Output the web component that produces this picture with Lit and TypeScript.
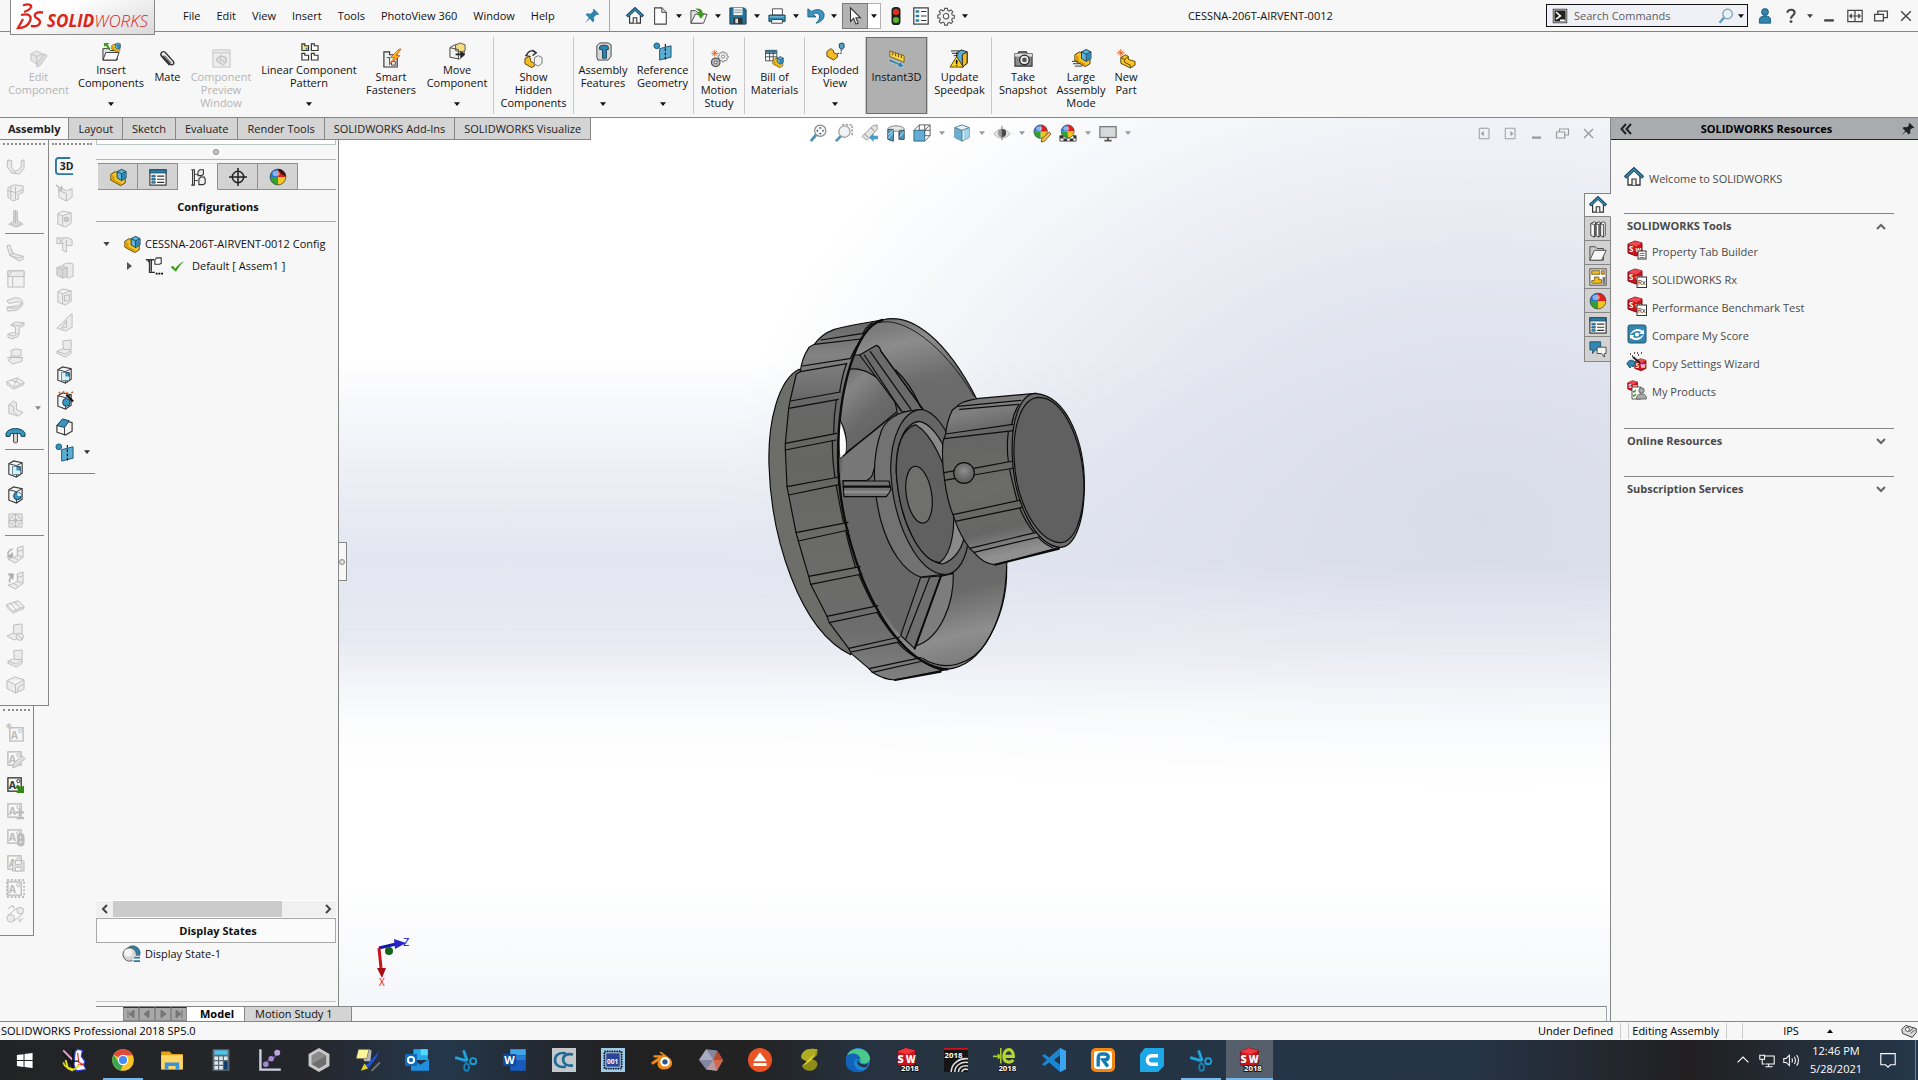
import { LitElement, html, svg, css, nothing } from "lit";
import { customElement, property, state } from "lit/decorators.js";
import { classMap } from "lit/directives/class-map.js";

/* ---------- shared icon parts ---------- */

const part = svg`
  <path d="M2 7l5-3 3 1.500v4l8 2v5l-5 3-11-6z" fill="#f7c325" stroke="#4a3a10"/>
  <path d="M2 7l4 2v4l7 3.500V19L2 13z" fill="#d99b0c"/>
  <path d="M9 4l5-2.500 5 2.500v7l-5 3-5-3z" fill="#5fb4da" stroke="#173f57"/>
  <path d="M9 4l5 2.500 5-2.500M14 6.500V14" fill="none" stroke="#173f57"/>
  <path d="M14.500 7l4-2v6l-4 2.500z" fill="#2f86b3"/>`;

const house = svg`
  <path d="M4 9v9h12V9l-6-6z" fill="#fff" stroke="#333" stroke-width="1.300"/>
  <path d="M8 18v-6h4v6" fill="#eee" stroke="#333" stroke-width="1.200"/>
  <path d="M1 10.500L10 2l9 8.500" fill="none" stroke="#16435c" stroke-width="3.400"/>
  <path d="M1.800 10L10 2.300 18.200 10" fill="none" stroke="#3c93bd" stroke-width="1.500"/>`;

const ball = svg`
  <path d="M10 10V1a9 9 0 0 1 9 9z" fill="#e02020"/>
  <path d="M10 10h9a9 9 0 0 1-9 9z" fill="#f0c51e"/>
  <path d="M10 10v9a9 9 0 0 1-9-9z" fill="#2fa32f"/>
  <path d="M10 10H1a9 9 0 0 1 9-9z" fill="#2c76d8"/>
  <circle cx="10" cy="10" r="8.800" fill="none" stroke="#444" stroke-width=".8"/>
  <ellipse cx="8" cy="6" rx="4" ry="3" fill="#fff" opacity=".45"/>`;

const swCube = svg`
  <path d="M1 4l7-3 7 2v10l-6 3-8-3z" fill="#c9151e" stroke="#7d0a10"/>
  <path d="M1 4l8 2.500L15 3 8 1z" fill="#ec4a50"/>
  <text x="2" y="12" font-size="8" font-weight="700" fill="#fff" font-family="Open Sans,sans-serif">S</text>
  <text x="8.500" y="12" font-size="6" font-weight="700" fill="#fff" font-family="Open Sans,sans-serif">W</text>`;

const frameA = svg`
  <rect x="2" y="3" width="14" height="14" fill="none" stroke="currentColor" stroke-width="1.400"/>
  <text x="3" y="15" font-size="11" font-weight="700" fill="currentColor" stroke="none" font-family="Open Sans,sans-serif">A</text>
  <circle cx="13" cy="6.500" r="1.700" fill="none" stroke="currentColor"/>`;

const gearPath = svg`
  <path d="M8.500 1.500h3l.5 2.300 1.500.7 2-1.300 2.100 2.100-1.300 2 .7 1.500 2.300.5v3l-2.300.5-.7 1.500 1.300 2-2.100 2.100-2-1.300-1.500.7-.5 2.300h-3L8 17.500l-1.500-.7-2 1.300-2.100-2.100 1.300-2-.7-1.500L.8 12V9l2.200-.5.7-1.500-1.300-2 2.100-2.100 2 1.300L8 3.500z" fill="#f2f2f2" stroke="#555" stroke-width="1.200"/>
  <circle cx="10" cy="10.300" r="3" fill="#fff" stroke="#555" stroke-width="1.200"/>`;

const grid9 = svg`<path d="M3 4h14v13H3zM3 8h14M3 12h14M8 4v13M12.500 4v13" fill="#fff" stroke="#333"/><path d="M3 4h14v3H3z" fill="#2c6f92"/>`;

const box = svg`<path d="M3 5l5-3 9 2v11l-6 4-8-3z" fill="#f4f4f4" stroke="#3a3a3a" stroke-width="1.200"/><path d="M3 5l8 2 6-3M11 7v12" fill="none" stroke="#3a3a3a"/>`;

const ICONS: Record<string, unknown> = {
  house,
  part,
  ball,
  pin: svg`<path d="M12 2l6 6-2 1-1-.5-3 3 .5 4L11 17l-3.500-4L2 18l4.500-6L3 8.500 4.500 7l4 .5 3-3L11 3z" fill="#2f83ad"/>`,
  pinDark: svg`<path d="M12 1l7 7-2 1-1-.5-3 3 .5 4L11 18l-4-4.500L1 19l5-6.500L2 8.500 4.500 7l4 .5 3-3L11 3z" fill="#222"/>`,
  newDoc: svg`<path d="M4 1h8l5 5v13H4z" fill="#fff" stroke="#444" stroke-width="1.200"/><path d="M12 1v5h5" fill="#ddd" stroke="#444"/>`,
  open: svg`<path d="M1 4h5l2 2h5v12H1z" fill="#ddd" stroke="#444"/><path d="M1 18L6 8h13l-4 10z" fill="#f7f7f7" stroke="#444"/><path d="M6 2c5-1 8 1 8 5h3l-5 6-4-6h3c0-2-2-3-5-5z" fill="#3f9c1d"/>`,
  save: svg`<path d="M1 1h16l2 2v16H1z" fill="#23739a" stroke="#12394d"/><path d="M5 1h10v8H5z" fill="#e9f3f8"/><path d="M6 3.500h8M6 6h8" stroke="#888"/><path d="M5 12h10v7H5z" fill="#333"/><path d="M7 13h3v5H7z" fill="#ddd"/>`,
  print: svg`<path d="M5 2h11v7H5z" fill="#fff" stroke="#444"/><path d="M1 9h18v7H1z" fill="#3288b0" stroke="#163f55"/><path d="M4 14h12v4H4z" fill="#fff" stroke="#333"/><path d="M2 11h16" stroke="#9cd0e6"/>`,
  undo: svg`<path d="M1 2v9h9L7 8c3-2 7-1 7 3 0 3-2 5-4 7 5-1 9-4 9-9 0-6-8-8-14-4z" fill="#3c93c2" stroke="#1d5c80"/>`,
  cursor: svg`<path d="M5 1v15l3.500-3.500L11 19l2.500-1-2.500-6h5z" fill="#fff" stroke="#333" stroke-width="1.200"/>`,
  traffic: svg`<rect x="5" y="0" width="10" height="20" rx="4" fill="#222"/><circle cx="10" cy="5.500" r="3.400" fill="#e4301e"/><circle cx="10" cy="14.500" r="3.400" fill="#57b52c"/>`,
  list: svg`<rect x="2" y="1" width="16" height="18" fill="#fff" stroke="#333" stroke-width="1.300"/><path d="M4 3.500h4v3H4zM4 8.500h4v3H4zM4 13.500h4v3H4z" fill="#2b7fa8"/><path d="M10 5h6M10 10h6M10 15h6" stroke="#333" stroke-width="1.300"/>`,
  gear: gearPath,
  prompt: svg`<rect x="1" y="1" width="18" height="18" fill="#222"/><rect x="2.500" y="2.500" width="15" height="15" fill="none" stroke="#fff"/><path d="M5 5l5.500 5L5 14M10 15.500h6" fill="none" stroke="#fff" stroke-width="2"/>`,
  lens: svg`<circle cx="12" cy="7.500" r="6" fill="#e6f1f8" stroke="#7f98a8" stroke-width="1.500"/><path d="M7.500 12L2 18.500" stroke="#5f9dc0" stroke-width="3"/>`,
  user: svg`<circle cx="10" cy="5" r="4.300" fill="#2d86b0" stroke="#174d69"/><path d="M3 19v-4c0-4 3-5 7-5s7 1 7 5v4z" fill="#2d86b0" stroke="#174d69"/>`,
  help: svg`<path d="M5.500 6c0-5 9-5 9 0 0 3.500-4.500 3-4.500 7.500" fill="none" stroke="#444" stroke-width="2.600"/><circle cx="10" cy="17" r="1.800" fill="#444"/>`,
  min: svg`<path d="M4 15.500h12" stroke="currentColor" stroke-width="3"/>`,
  split: svg`<path d="M1 3h18v14H1zM10 3v14M4 10h12M6 7.500L3.500 10 6 12.500M14 7.500l2.500 2.500-2.500 2.500" fill="none" stroke="currentColor" stroke-width="1.500"/>`,
  restore: svg`<path d="M2 8h11v8H2zM6 8V4h12v8h-5" fill="none" stroke="currentColor" stroke-width="1.600"/>`,
  close: svg`<path d="M4 4l12 12M16 4L4 16" stroke="currentColor" stroke-width="1.800"/>`,
  paneL: svg`<path d="M3 3h13v14H3z" fill="none" stroke="currentColor" stroke-width="1.300"/><path d="M9 6.500v7L5 10z" fill="currentColor"/>`,
  paneR: svg`<path d="M3 3h13v14H3z" fill="none" stroke="currentColor" stroke-width="1.300"/><path d="M10 6.500v7l4-3.500z" fill="currentColor"/>`,

  /* ribbon */
  editComp: svg`<g fill="#e6e6e6" stroke="#c2c2c2"><path d="M2 5l6-3 6 3v7l-6 4-6-4z"/><path d="M2 5l6 3 6-3M8 8v8" fill="none"/><path d="M16 5l3 2-7 10-4 2 1-4z" fill="#ddd"/></g>`,
  insertComp: svg`<path d="M1 7h6l2 2h7v10H1z" fill="#e4e4e4" stroke="#333"/><path d="M1 19l3-8h14l-3 8z" fill="#fafafa" stroke="#333"/><path d="M2 1h6L6 3l3 4-2 1-3-4-2 1z" fill="#3f9c1d"/><g transform="translate(9 0) scale(.55)">${part}</g>`,
  clip: svg`<path d="M5 7l8 9c2 2 5-1 3-3L8 4C6 1 1 4 4 8l8 9" fill="none" stroke="#333" stroke-width="1.500"/><path d="M7 7l7 8" stroke="#777" stroke-width="1.200"/>`,
  preview: svg`<path d="M1 1h18v18H1zM1 4h18" fill="#ededed" stroke="#c4c4c4"/><path d="M5 10l4-3 6 2v5l-3 3-7-4zM9 7v4l6 3" fill="#ddd" stroke="#bbb"/>`,
  pattern: svg`<g fill="#fff" stroke="#333" stroke-width="1.200"><path d="M2 2h3v2h4v5H2z" fill="#ffe680"/><path d="M12 2h3v2h4v5h-7zM2 12h3v2h4v5H2zM12 12h3v2h4v5h-7z"/></g><path d="M6 6h2v2H6z" fill="#2b7fa8"/>`,
  smart: svg`<path d="M2 3h6v3h8v13H2z" fill="#eee" stroke="#333" stroke-width="1.200"/><path d="M5 9h3v8M10 13h4v4h-4z" fill="none" stroke="#444"/><path d="M18 0l-9 9h4l-5 7 11-9h-4l5-7z" fill="#ffb01e" stroke="#d2501a" stroke-width=".8"/>`,
  move: svg`<path d="M2 6l5-3 10 1v10l-5 4-10-2z" fill="#f0f0f0" stroke="#444"/><path d="M8 3l5-2 5 2v6l-4 2-6-2z" fill="#f7dc80" stroke="#555"/><path d="M2 6l9 2v10" fill="none" stroke="#444"/><path d="M8 12h5V9l5 4-5 4v-3H8z" fill="#222"/>`,
  showHidden: svg`<path d="M3 6c2-5 7-5 9-2M9 1l4 3-4 3M5 3L2 7l5 1" fill="none" stroke="#333" stroke-width="1.400"/><path d="M1 10l4-2 2 2v3l4 2v3l-3 1.500-7-4z" fill="#f5bb22" stroke="#5a4308"/><path d="M11 9l4-2 4 2v6l-4 3-4-2z" fill="#f2f2f2" stroke="#777"/>`,
  asmFeat: svg`<path d="M3 4l3-3h9l3 2v12l-3 4H4l-1-3z" fill="#d8d8d8" stroke="#444"/><path d="M6 5c0-2 9-2 9 0v3h-2v9H9V8H6z" fill="#2f86b3" stroke="#163f55"/>`,
  refGeo: svg`<circle cx="4" cy="4" r="3" fill="#3a94c0" stroke="#1b5573"/><path d="M7 7l12-3v12L7 19z" fill="#5aaed2" stroke="#1b5573"/><path d="M13 2v18" stroke="#111" stroke-width="1.200" stroke-dasharray="3 1.500"/>`,
  motion: svg`<g transform="translate(8 2) scale(.58)">${gearPath}</g><circle cx="6" cy="14" r="4.500" fill="#b8b8b8" stroke="#555" stroke-width="1.300"/><circle cx="6" cy="14" r="1.500" fill="#fff" stroke="#555"/><path d="M5 1v7M1.500 4.500h7M2.500 2l5 5M7.500 2l-5 5" stroke="#e2641c"/>`,
  bom: svg`<g transform="translate(-2 -2) scale(.85)">${grid9}</g><g transform="translate(7 7) scale(.65)">${part}</g>`,
  exploded: svg`<path d="M1 10l4-3 3 2v2l4 2v3l-4 3-7-4z" fill="#f5bb22" stroke="#5a4308"/><path d="M14 2l3-1 2 1v4l-2.500 2L14 6z" fill="#4da1c8" stroke="#173f57"/><path d="M12 12h4V8" fill="none" stroke="#222" stroke-dasharray="2 1"/>`,
  instant: svg`<path d="M3 2l15 5v7L3 8z" fill="#f7d14a" stroke="#7a6112"/><path d="M6 3.500v3M9 4.500v3M12 5.500v3M15 6.500v3" stroke="#5a470c"/><path d="M2 10l11 5 1-2 4 6-7 0 1-2L2 13z" fill="#2d7fa8" stroke="#e8f2f7" stroke-width=".5"/>`,
  speedpak: svg`<path d="M7 4l5-3 6 2v12l-5 4-6-2z" fill="#5aaed2" stroke="#222"/><path d="M13 6l5-3v12l-5 4z" fill="#f5bb22" stroke="#222"/><path d="M1 2h9M2 4.500h7M4 7h4" stroke="#222"/><path d="M7 8l7 11H0z" fill="#ffd21e" stroke="#5a4308"/><path d="M7 11.500v4M7 16.500v1.200" stroke="#000" stroke-width="1.600"/>`,
  camera: svg`<path d="M1 5h3l1-2h8l1 2h5v13H1z" fill="#8d8d8d" stroke="#333" stroke-width="1.200"/><path d="M1 5h18v3H1z" fill="#ddd"/><circle cx="11" cy="11.500" r="5" fill="#eee" stroke="#222" stroke-width="1.400"/><circle cx="11" cy="11.500" r="2.500" fill="#555"/>`,
  large: svg`<g transform="translate(1 -1)">${part}</g><path d="M0 13h6M1 15.500h8M3 18h8" stroke="#333"/>`,
  newPart: svg`<path d="M4 9l5-3 3 2v3l7 2v4l-5 3L4 15z" fill="#f7c325" stroke="#5a4308"/><path d="M4 9l4 2 4-3M8 11v3l6 3v3" fill="none" stroke="#5a4308"/><path d="M4 0v8M0 4h8M1.500 1.500l5 5M6.500 1.500l-5 5" stroke="#e2641c"/>`,

  /* heads-up view bar */
  zoomFit: svg`<path d="M8 12l-6 7" stroke="#4f93b8" stroke-width="3.200"/><circle cx="12.500" cy="7.500" r="6.300" fill="#f4f7fa" stroke="#888" stroke-width="1.300"/><path d="M12.500 3l1.500 2h-3zM12.500 12l1.500-2h-3zM8 7.500L10 6v3zM17 7.500L15 6v3z" fill="#444"/>`,
  zoomArea: svg`<path d="M8 1h11v12" fill="none" stroke="#555" stroke-dasharray="2.500 1.500"/><path d="M7 13l-6 6" stroke="#4f93b8" stroke-width="3"/><circle cx="10.500" cy="8.500" r="6.300" fill="#eef3f7" stroke="#999" stroke-width="1.300"/>`,
  prevView: svg`<path d="M1 14L13 2l5-1v5L7 18z" fill="#e4e4e4" stroke="#999"/><path d="M4 11l4 4M11 4l4 4" stroke="#777"/><path d="M19 13h-5v-3l-5 5 5 5v-3h5z" fill="#4b9cc6"/>`,
  section: svg`<path d="M1 5c3-4 15-4 18 0v12h-6V8H7v11L1 17z" fill="#e6e6e6" stroke="#777"/><path d="M1 6h6v13l-6-2zM14 7h5v10h-5z" fill="#4f9fc4" stroke="#356"/><path d="M1 12l6-5M1 16l6-6M14 14l5-5" stroke="#dceef6"/>`,
  orient: svg`<path d="M7 1h12v12H7zM13 1v12M7 7h12" fill="#fff" stroke="#555"/><path d="M1 7h12v12H1z" fill="#62add0" stroke="#2f6684"/><path d="M1 7l6-6M13 7l6-6M13 19l6-6" stroke="#555"/>`,
  cube: svg`<path d="M2 4l8-3 8 3v11l-8 4-8-4z" fill="#e9f4fa" stroke="#4a7389"/><path d="M2 4l8 3v12l-8-4z" fill="#68b0d2"/><path d="M12 6.500L18 4v11l-6 3z" fill="#a5d3e8"/><path d="M2 4l8 3 8-3M10 7v12" fill="none" stroke="#4a7389"/>`,
  eye: svg`<path d="M1 11c5-7 13-7 18 0-5 6-13 6-18 0z" fill="#e2e2e2" stroke="#aaa"/><circle cx="10" cy="10" r="4.500" fill="#999"/><path d="M10 5.500a4.500 4.500 0 0 1 0 9z" fill="#444"/><path d="M10 2v16" stroke="#666"/>`,
  ballPen: svg`<g transform="scale(.85)">${ball}</g><path d="M18 9l2 2-7 8-4 1 1-4z" fill="#f4c430" stroke="#654"/>`,
  ballScene: svg`<path d="M1 13h18v6H1z" fill="#fff" stroke="#444"/><path d="M1 13h4v3h4v-3h3v3h4v-3h3v3h-3v3h-4v-3H9v3H5v-3H1z" fill="#333"/><g transform="translate(1.500 0) scale(.82)">${ball}</g>`,
  monitor: svg`<rect x="1" y="3" width="18" height="12" fill="#d5d9dc" stroke="#777" stroke-width="1.400"/><path d="M10 15v3M6 18.500h8" stroke="#555" stroke-width="2"/>`,

  /* manager tabs and tree */
  props: svg`<rect x="1" y="2" width="18" height="17" fill="#fff" stroke="#333" stroke-width="1.300"/><path d="M1 2h18v3.500H1z" fill="#2b7fa8" stroke="#1d4e68"/><path d="M3 8h4v2H3zM3 11.500h4v2H3zM3 15h4v2H3z" fill="#2b7fa8" stroke="#1d4e68" stroke-width=".6"/><path d="M9 9h8M9 12.500h8M9 16h8" stroke="#333" stroke-width="1.200"/>`,
  config: svg`<path d="M4 2v17M2.500 2h4M2.500 19h4M6 2v17" fill="none" stroke="#333" stroke-width="1.200"/><path d="M6 7h4M6 14h4" stroke="#333"/><path d="M10 4l2-2h4v5l-2 1.500h-4zM11 12l2-2h4v1l1 1v5l-2 1.500h-5z" fill="#eee" stroke="#333" stroke-width="1.200"/>`,
  target: svg`<circle cx="10" cy="10" r="6.300" fill="none" stroke="#222" stroke-width="1.700"/><path d="M10 0v20M0 10h20" stroke="#222" stroke-width="1.700"/>`,
  ballDark: svg`${ball}<path d="M10 1c4 0 8 3 9 8-3-1-8-3-9-8z" fill="#301818"/>`,
  treeCfg: svg`<path d="M1 3h9M5 3v14h6M3 3v1M7 3v13M3 5h2" fill="none" stroke="#333" stroke-width="1.500"/><path d="M11 3l2-2h5v6l-2 1h-5z" fill="#fff" stroke="#333" stroke-width="1.200"/><path d="M12 18.500h2M15 18.500h2M18 18.500h2" stroke="#000" stroke-width="2"/>`,
  check: svg`<path d="M1 11l3-2 3 4c3-5 7-8 12-10-5 4-8 8-11 14z" fill="#2f9e0f"/>`,
  dispState: svg`<circle cx="12" cy="9" r="8" fill="#2f7fa6" stroke="#1b5573"/><circle cx="8.500" cy="10.500" r="7.500" fill="#d4d4d4" stroke="#555"/><ellipse cx="7" cy="8.500" rx="4.500" ry="4" fill="#f6f6f6"/><path d="M12 14h8M12 18h8" stroke="#f7f7f7" stroke-width="4"/><path d="M13 14h7M13 18h7" stroke="#2a7aa1" stroke-width="2"/>`,

  /* left tool columns, unavailable commands */
  d1: svg`<path d="M2 3l4 1v7l3 4 4-1 3-4V4l3-1v9l-5 6-7-1-5-7z"/><path d="M2 3l-1 7 6 8M9 15l1 3"/>`,
  d2: svg`<path d="M2 5l6-3 10 1v7l-5 2v5l-6 2-5-4zM2 8l8 2 8-3M10 4v13M5 4v12"/>`,
  d3: svg`<path d="M8 2c2-1 4 0 4 1v9l6 4-7 3-8-3 5-3z" fill="#d6d6d6"/><path d="M10 2v13"/>`,
  d4: svg`<path d="M1 3l3-1 3 9 11 3v3l-4 2L4 13zM7 11l-3 2M5 6l3 5M18 14l-5 2-9-3"/>`,
  d5: svg`<path d="M2 2h17v17H2z" fill="#f2f2f2"/><path d="M2 2h17v6H2zM7 8v11M2 8l5-6"/>`,
  d6: svg`<path d="M1 6l7-3c12-1 13 9 3 13l-9 1-1-4 12-2c3-1 3-3 0-4L3 9z"/><path d="M1 13l8 1c6-1 9-4 7-7" fill="none"/>`,
  d7: svg`<path d="M5 4l5-3 9 1v3l-5 2v6l-1 3-6 3-5-2v-3l5-2 3 1V7z"/><path d="M5 4l9 1 5-3M2 14l6 2 5-3" fill="none"/>`,
  d8: svg`<path d="M5 4l5-2 6 1v6l-5 1-5-1zM5 9v3l-3 2 5 4 10-3v-3l-5-2M1 11l17 0"/>`,
  d9: svg`<path d="M1 9l11-4 7 5-11 5zM1 9v3l7 5 11-5v-2M6 8l9 3M12 6l-4 8"/>`,
  d10: svg`<path d="M3 6l5-4 3 2v7l7 3-5 4-10-3zM3 6l5 2v6l5 4"/>`,
  d11: svg`<path d="M3 3h14v14H3z"/><circle cx="10" cy="10" r="6"/><path d="M10 3v14M3 10h14M6 6l8 8M14 6l-8 8"/>`,
  d12: svg`<path d="M12 3l6-2v12l-8 6-8-4 6-2 4-2z"/><path d="M12 3v8l6 2M12 7l6-2M8 13l5 3" fill="none"/><path d="M7 4c-5 2-6 5-4 8" fill="none" stroke-width="2"/><path d="M1 13h6V8z" fill="#aaa"/>`,
  d12b: svg`<path d="M12 3l6-2v12l-8 6-8-4 6-2 4-2z"/><path d="M12 3v8l6 2M12 7l6-2M8 13l5 3" fill="none"/><path d="M4 12c-1-4 1-6 4-7" fill="none" stroke-width="2"/><path d="M2 3h6l-1 6z" fill="#aaa"/>`,
  d13: svg`<path d="M1 8l12-4 6 6-12 5zM1 8v3l6 6 12-5v-2M5 7l6 7M9 5l6 7"/>`,
  d14: svg`<path d="M8 2l9-1v10l-3 1-6-1zM8 10l-7 4 8 4 8-5"/><circle cx="14.500" cy="14.500" r="3.800"/><path d="M12 12l5 5"/>`,
  d15: svg`<path d="M8 2l9-1v10l-8 0zM8 10l-6 3 9 3 6-4M2 13v2l9 4 6-4v-3"/>`,
  d16: svg`<path d="M1 6l8-4 10 3v10l-9 4-9-5zM1 6l9 4 9-5M10 10v9M12 18c0-4 2-7 6-8"/>`,
  d17: svg`<path d="M4 8l4-2 4 2 6-2v9l-6 4-8-4zM4 8l8 3M12 11v8"/><path d="M1 2l6 5M7 3v4H3" stroke-width="1.600" fill="none"/>`,
  d18: svg`<path d="M3 5l5-3 9 2v11l-6 4-8-3zM3 5l5 2 9-3M8 7v11"/><circle cx="12" cy="11" r="2.500" fill="#c8c8c8"/>`,
  d18b: svg`<path d="M3 5l5-3 9 2v11l-6 4-8-3zM3 5l5 2 9-3M8 7v11M10 9l5-1v6l-5 1z"/>`,
  d19: svg`<path d="M2 3h12l4 2v6h-6v7l-4-2V9H2zM12 5v6M4 4l5 5M9 4L4 9"/>`,
  d20: svg`<path d="M8 4l5-2 6 1v13l-5 2-2-1"/><path d="M2 7l5-2 6 2v9l-5 2-6-3z" fill="#d9d9d9"/><path d="M2 7l6 2 5-2M8 9v9" fill="none"/>`,
  d21: svg`<path d="M2 16L16 2l2-1v14l-7 4zM12 8v7l-5 1z"/>`,
  a1: svg`<g transform="translate(2 2)">${frameA}</g><path d="M3 0v6M0 3h6M1 1l4 4M5 1L1 5" stroke="currentColor" fill="none"/>`,
  a2: svg`${frameA}<path d="M17 7l3 3-8 8-5 2 1-5z" fill="#ddd" stroke="currentColor"/>`,
  a3: svg`${frameA}<path d="M12 10l4 3 3-2v8h-8l2-3-3-3z" fill="#2f8a12" stroke="none"/>`,
  a4: svg`${frameA}<path d="M10 12h9M14.500 8v8M11 18h8" stroke="currentColor" stroke-width="2.200"/>`,
  a5: svg`${frameA}<rect x="12" y="7" width="7" height="13" rx="3" fill="currentColor"/><circle cx="15.500" cy="11" r="1.500" fill="#eee"/><circle cx="15.500" cy="16" r="1.500" fill="#eee"/>`,
  a6: svg`${frameA}<path d="M7 8h11l1 1v10H7z" fill="#ddd" stroke="currentColor"/><path d="M10 8h6v4h-6zM10 15h6v4h-6z" fill="#f7f7f7" stroke="currentColor"/>`,
  a7: svg`${frameA}<rect x="1" y="1" width="18" height="18" fill="none" stroke="currentColor" stroke-width="2" stroke-dasharray="2 2"/>`,
  a8: svg`<circle cx="5" cy="14" r="4"/><circle cx="15" cy="6" r="3.500"/><path d="M2 11L12 3M8 17l10-8M2 4l4-3M5 1h3v3M18 14l-4 4v-4"/>`,
  td: svg`<path d="M16 1H4C2 1 1 2 1 4v11c0 2 1 3 3 3h15" fill="none" stroke="#2a7aa1" stroke-width="2"/><text x="5" y="14" font-size="11" font-weight="700" fill="#222" font-family="Open Sans,sans-serif">3D</text>`,
  pocket: svg`${box}<path d="M7 8h8v8H7z" fill="#3a94c0" stroke="#163f55"/><path d="M7 8h4v4h4v4H7z" fill="#d9edf6"/>`,
  holeW: svg`${box}<circle cx="12" cy="12" r="4" fill="#3a94c0" stroke="#163f55"/><path d="M12 4l7 7" stroke="#111" stroke-width="2.400"/><path d="M4 1l2 2M9 0v3M13 1l-1 2M17 2l2-1" stroke="#e2641c" stroke-width="1.600"/>`,
  hole: svg`${box}<circle cx="12" cy="11.500" r="4" fill="#3a94c0" stroke="#163f55"/><path d="M12 11.500h4a4 4 0 0 0-4-4z" fill="#d9edf6"/>`,
  chamfer: svg`<path d="M2 9l6-6 10 3v9l-7 4-9-3z" fill="#f4f4f4" stroke="#333" stroke-width="1.200"/><path d="M2 9l6-7 7 2-5 7z" fill="#3a94c0" stroke="#163f55"/><path d="M10 11v8" stroke="#333"/>`,
  mushroom: svg`<path d="M8 8h4v10c0 1-4 1-4 0z" fill="#ddd" stroke="#333"/><path d="M0 9c2-7 18-7 20 0v3h-4l-1-3H5l-1 3H0z" fill="#3a94c0" stroke="#163f55"/>`,

  /* task pane */
  books: svg`<g fill="#fff" stroke="#333"><path d="M2 4l4-2 2 1v14l-2 2-4-2zM7 4l4-2 2 1v14l-2 2-4-2zM12 4l4-2 2 1v14l-2 2-4-2z"/><path d="M2 4l4 1v14M7 4l4 1v14M12 4l4 1v14" fill="none"/></g>`,
  folder: svg`<path d="M1 3h6l2 2h7v13H1z" fill="#c9c9c9" stroke="#444"/><path d="M1 18L6 7h13l-5 11z" fill="#f7f7f7" stroke="#444"/>`,
  palette: svg`<rect x="1" y="1" width="18" height="18" fill="#fff" stroke="#333"/><path d="M3 3h9v4H3zM14 3h3v4h-3zM6 10h5v3h3v4H3v-3h3z" fill="#f2bd1b" stroke="#5a4308" stroke-width=".8"/><path d="M15 10h3v8h-3z" fill="#777"/>`,
  chat: svg`<path d="M1 2h12v9H7l-3 4v-4H1z" fill="#3288b0" stroke="#1b5573"/><path d="M9 8h10v7h-2v4l-3-4H9z" fill="#f4f4f4" stroke="#444"/>`,
  ptb: svg`${swCube}<rect x="11" y="11" width="8" height="8" fill="#fff" stroke="#333"/><path d="M12.500 13.500h5M12.500 15.500h5M12.500 17.500h5" stroke="#555" stroke-width=".8"/>`,
  rx: svg`${swCube}<rect x="10" y="9" width="9.500" height="10.500" fill="#fff" stroke="#333"/><text x="10.800" y="17" font-size="7" fill="#222" font-family="Open Sans,sans-serif">Rx</text>`,
  score: svg`<rect x="1" y="1" width="18" height="18" rx="2" fill="#3585ae" stroke="#1c5776"/><path d="M3 11c2-6 9-8 13-4l1-2v5h-5l2-2c-3-2-7-1-11 3zM17 10c-2 6-9 8-13 4l-1 1v-4h4l-1 2c3 2 7 1 11-3z" fill="#fff"/><circle cx="10" cy="10.500" r="2" fill="#fff"/>`,
  wizard: svg`<g transform="translate(7 6) scale(.8)">${swCube}</g><path d="M0 12c0-4 8-6 8 0l-2 3-1-2-2 3z" fill="#3585ae" stroke="#1c5776"/><path d="M6 5l7 6" stroke="#222" stroke-width="2"/><path d="M3 2h1M7 1h1M11 3h1M5 4h1M14 1h1M10 1h1" stroke="#222" stroke-width="1.400"/>`,
  products: svg`<g transform="scale(.7)">${swCube}</g><path d="M5 7h9v12H5z" fill="#fff" stroke="#555"/><path d="M6 11l1 1 2-2M6 15l1 1 2-2" fill="none" stroke="#2f9e0f" stroke-width="1.300"/><circle cx="14.500" cy="10.500" r="2.700" fill="#aaa" stroke="#666"/><path d="M9.500 19c0-4 2-5 5-5s5 1 5 5z" fill="#aaa" stroke="#666"/>`,
  tag: svg`<path d="M1 8l5-5 13 4v5l-5 6L2 13z" fill="#ddd" stroke="#333" stroke-width="1.200"/><circle cx="8" cy="8" r="2.500" fill="#fff" stroke="#333"/><path d="M12 13l5-4M10 11l5-4" stroke="#333"/>`,

  /* taskbar */
  win: svg`<path d="M2 4.300L9 3.300v6.300H2zM10 3.100L18.500 2v7.600H10zM2 10.500h7v6.300l-7-1zM10 10.500h8.500V18L10 16.900z" fill="#fff"/>`,
  plane: svg`<path d="M11 3l2-2 4 1-1 5 3 4-1 3 2 4-8 1-2-5z" fill="#fff" stroke="#2b3ee0" stroke-width=".9"/><path d="M13 4l1 8 4 2M13 14h5" stroke="#e03030" fill="none"/><path d="M1 2l8 8" stroke="#e3a9d0" stroke-width="1.500"/><path d="M1 5l8 10M9 1v17M6 11h8" stroke="#111" fill="none"/><path d="M1 12c1 4 5 5 9 6l5-4M3 10l2 7 4 2" stroke="#e8e020" stroke-width="1.500" fill="none"/>`,
  chrome: svg`<circle cx="10" cy="10" r="9" fill="#f7c52b"/><path d="M10 10L2.200 5.500A9 9 0 0 1 17.800 5.500L18 6h-8z" fill="#de4b3c"/><path d="M2.200 5.500L6.500 12l3.500 2-2 4.800A9 9 0 0 1 2.200 5.500z" fill="#3aa757"/><circle cx="10" cy="10" r="4.300" fill="#fff"/><circle cx="10" cy="10" r="3.400" fill="#4a8af4"/>`,
  explorer: svg`<path d="M1 3h7l2 2h9v12H1z" fill="#e5a417"/><path d="M1 6h18v12H1z" fill="#ffd767"/><path d="M4 18v-6h12v6h-3v-3H7v3z" fill="#3a94dd"/>`,
  calc: svg`<rect x="3" y="1" width="14" height="18" fill="#5b6b77"/><rect x="4.500" y="2" width="11" height="3.500" fill="#4cc8f0"/><path d="M4.500 7h3v3h-3zM8.500 7h3v3h-3zM12.500 7h3v3h-3zM4.500 11h3v3h-3zM8.500 11h3v3h-3zM4.500 15h3v3h-3zM8.500 15h3v3h-3z" fill="#e4e8ea"/><path d="M12.500 11h3v7h-3z" fill="#12406e"/>`,
  graph: svg`<path d="M2 1v17h17" fill="none" stroke="#cfcfe4" stroke-width="2"/><path d="M5 14l4-4 3 0 4-6" stroke="#7a5fa8" fill="none"/><circle cx="6.500" cy="13.500" r="2.300" fill="#a48bd0"/><circle cx="11" cy="9" r="2.300" fill="#a48bd0"/><circle cx="16" cy="4" r="2.500" fill="#b8a6dc"/>`,
  hex: svg`<path d="M10 0l8.700 5v10L10 20l-8.700-5V5z" fill="#c8c8c8"/><path d="M10 3l6 3.500v7L10 17l-6-3.500v-7z" fill="#6e6e6e"/><path d="M10 3l6 3.500L4 13.500v-7z" fill="#8b8b8b"/>`,
  notes: svg`<path d="M2 1l9 0-2 8-9 0z" fill="#fbf49b" stroke="#444" stroke-width=".6"/><path d="M11 1l2 1-1 9H7L6 9h3z" fill="#b6b6b6"/><path d="M13 19l7-7" stroke="#777" stroke-width="1.500"/><path d="M19 3l-9 10-3 1 1 3 3-1 6-8z" fill="#1d53d8"/><path d="M7 13l-3 6 6-2z" fill="#e8d51c"/>`,
  outlook: svg`<path d="M7 1h12v9H7z" fill="#28a8ea"/><path d="M5 9l8 5 7-5v10H5z" fill="#1f8fe0"/><path d="M13 1h6v5h-6z" fill="#50d9ff"/><rect x="0" y="5" width="10" height="10" fill="#0f6cbd"/><circle cx="5" cy="10" r="2.600" fill="none" stroke="#fff" stroke-width="1.600"/>`,
  snip: svg`<path d="M8 2l3 9M1 8l10 3" stroke="#1291c9" stroke-width="2.600"/><path d="M8 2l3 8M1 8l9 2" stroke="#3cb9ea" stroke-width=".8"/><circle cx="16" cy="11" r="2.500" fill="none" stroke="#19a0d8" stroke-width="1.500"/><ellipse cx="10.500" cy="16" rx="2" ry="3" fill="none" stroke="#1683b8" stroke-width="1.500"/>`,
  word: svg`<path d="M6 1h13v5H6z" fill="#41a5ee"/><path d="M6 6h13v4H6z" fill="#2b7cd3"/><path d="M6 10h13v9H6z" fill="#185abd"/><rect x="0" y="5" width="11" height="10" fill="#144a9e"/><text x="1" y="13.500" font-size="9" font-weight="700" fill="#fff" font-family="Open Sans,sans-serif">W</text>`,
  cc: svg`<rect width="20" height="20" fill="#c4c8ca"/><path d="M11.500 4.500c-12-3-12 14 0 11M17.500 5.500c-11-3-11 11 0 9" fill="none" stroke="#1d6a94" stroke-width="2.200"/>`,
  chip: svg`<rect width="20" height="20" fill="#9dcbe8"/><rect x="3" y="3" width="14" height="14" fill="#123" stroke="#012" stroke-width="2" stroke-dasharray="1 1"/><rect x="4" y="4" width="12" height="12" fill="#28479a" stroke="#cde" stroke-width=".8"/><text x="5" y="13" font-size="5.500" font-weight="700" fill="#fff" font-family="Open Sans,sans-serif">001</text>`,
  blender: svg`<path d="M9 3l8 6c4 5-1 9-5 9-5 0-7-4-5-7l-5 3-1-2 6-4H3V6h8L8 4z" fill="#ee8b1a"/><circle cx="12.500" cy="11.500" r="4" fill="#fff"/><circle cx="12.500" cy="11.500" r="2.200" fill="#23588e"/>`,
  poly: svg`<path d="M6 1l9 1 5 8-5 9-9-1-6-8z" fill="#8587a0"/><path d="M6 1l6 9-12 0z" fill="#a9abc0"/><path d="M15 2l5 8-8 0z" fill="#b8482c"/><path d="M20 10l-5 9-3-9z" fill="#d2694c"/><path d="M12 10l3 9-9-1z" fill="#b69aa0"/>`,
  eject: svg`<circle cx="10" cy="10" r="10" fill="#ea5424"/><path d="M10 3.500l5.500 7.500h-11zM4.500 12.500h11V15h-11z" fill="#fff"/>`,
  essS: svg`<path d="M17 1C8-1 2 4 4 9l6 3-6 3c3 6 12 5 13-1 0-3-2-4-5-5 4-1 6-4 5-8z" fill="#8f8c1c"/><path d="M4 9l6 3 2-3 5-8C8-1 2 4 4 9z" fill="#b0ac22"/><path d="M16 4L4 15c4-1 9-5 12-11z" fill="#dcd634"/>`,
  edge: svg`<circle cx="10" cy="10" r="10" fill="#1a86d4"/><path d="M1 6C4-1 17-2 20 8c0 5-5 6-8 4 2-4-5-8-11-6z" fill="#4bc98a"/><path d="M1 6c6-3 10-1 11 3-4-2-7 3-4 7 2 3 6 3 8 1-6 6-18 3-16-8z" fill="#1063b8"/><path d="M12 8c-3 0-3 3 0 5 2 1 5 1 7-1l-2 4c-8 1-10-6-5-8z" fill="#23334a"/>`,
  sw18: svg`<path d="M2 3l7-3 8 2v11l-6 4-9-3z" fill="#c9151e" stroke="#6d0a10" stroke-width=".6"/><path d="M2 3l8 2.500L17 2 9 0z" fill="#f0383e"/><text x="2" y="12.500" font-size="9" font-weight="800" fill="#fff" font-family="Open Sans,sans-serif">S</text><text x="9" y="12.500" font-size="8" font-weight="800" fill="#fff" font-family="Open Sans,sans-serif">W</text><text x="5" y="19.500" font-size="6.500" font-weight="700" fill="#fff" stroke="#111" stroke-width="1.500" paint-order="stroke" font-family="Open Sans,sans-serif">2018</text>`,
  comp18: svg`<rect width="20" height="20" fill="#151515"/><rect width="20" height="1.500" fill="#c9151e"/><text x=".5" y="8.500" font-size="6.500" font-weight="700" fill="#fff" font-family="Open Sans,sans-serif">2018</text><path d="M6 20c0-7 7-12 14-11M9 20c0-5 5-9 11-8M12 20c0-3 3-6 8-5M15 20c0-2 2-3 5-2" fill="none" stroke="#ddd" stroke-width="1.300"/>`,
  e18: svg`<path d="M0 7h5M4 5l2 2-2 2M6.500 0v13" fill="none" stroke="#a8c832" stroke-width="1.300"/><path d="M9 7h8c0-8-8-7-8 0 0 5 5 6 8 3" fill="none" stroke="#b7d52d" stroke-width="2.600"/><text x="4.500" y="19.500" font-size="6.500" font-weight="700" fill="#fff" stroke="#111" stroke-width="1.200" paint-order="stroke" font-family="Open Sans,sans-serif">2018</text>`,
  vscode: svg`<path d="M15 0l5 2.500v15L15 20 6 12l-4 3-2-1.500 4-3.500-4-3.500L2 5l4 3zM15 6l-5 4 5 4z" fill="#1b85cf" fill-rule="evenodd"/><path d="M15 0l5 2.500v15L15 20z" fill="#3aa5ee"/>`,
  revo: svg`<rect width="20" height="20" rx="4" fill="#f5860f"/><rect x="2.500" y="2.500" width="15" height="15" rx="2" fill="#fff"/><path d="M6 15.500V9c0-3 1-4 3-4h2c5 0 4 5 0 5h-1l4 5.500" fill="none" stroke="#1178b0" stroke-width="2.800"/>`,
  cura: svg`<path d="M4 0h16v15l-5 5H0V5z" fill="#1ea7e6"/><path d="M15 6.500H9.500c-4.500 0-4.500 7 0 7H15" fill="none" stroke="#fff" stroke-width="2.800"/>`,
  trayUp: svg`<path d="M1 14l9-9 9 9" fill="none" stroke="#fff" stroke-width="1.900"/>`,
  net: svg`<path d="M6 5h13v10H8M12 15v3M8 18.500h9M1 4h6v5H1zM4 9v6h3" fill="none" stroke="#fff" stroke-width="1.300"/>`,
  vol: svg`<path d="M1 8h3l4-4v13l-4-4H1zM11 8c1 1 1 4 0 5M14 6c2 2 2 7 0 9M17 4c3 3 3 10 0 13" fill="none" stroke="#fff" stroke-width="1.300"/>`,
  note: svg`<path d="M1 2h18v14h-6l-3 3-3-3H1z" fill="none" stroke="#fff" stroke-width="1.400"/>`,
};

const icon = (name: string, cls = "") =>
  html`<svg class="ic ${cls}" viewBox="0 0 20 20" aria-hidden="true">${ICONS[name]}</svg>`;

const caret = html`<svg class="caret" viewBox="0 0 8 5" aria-hidden="true"><path d="M0 0h8L4 5z" fill="currentColor"/></svg>`;

const base = css`
  * { box-sizing: border-box; }
  button { font: inherit; color: inherit; background: none; border: 0; padding: 0; margin: 0; display: flex; align-items: center; justify-content: center; }
  a { color: inherit; text-decoration: none; }
  .ic { width: 18px; height: 18px; display: block; flex: none; overflow: visible; }
  .caret { width: 6px; height: 4px; display: block; flex: none; }
  h2, h3, ul, p { margin: 0; padding: 0; font-size: inherit; }
  ul { list-style: none; }
`;

/* ---------- title bar ---------- */

@customElement("title-bar")
export class TitleBar extends LitElement {
  static styles = [base, css`
    :host { display: flex; align-items: center; height: 32px; border-bottom: 1px solid #868686; position: relative; z-index: 3; }
    .logo { align-self: flex-start; margin-left: 10px; width: 145px; height: 35px; flex: none; display: flex; align-items: center; border: 1px solid #8a8a8a; border-top: 0; background: linear-gradient(160deg, #fff 30%, #d9d9d9); color: #d9261c; padding: 0 0 0 5px; gap: 3px; }
    .ds { width: 28px; height: 28px; }
    .word { font: italic 700 17px/20px "Open Sans", sans-serif; padding-top: 7px; }
    .word span { font-weight: 300; }
    nav { display: flex; gap: 16px; margin-left: 28px; }
    .pin { margin: 0 8px 0 28px; }
    .quick { display: flex; align-items: center; align-self: stretch; border-left: 1px solid #a8a8a8; padding-left: 15px; }
    .quick button { width: 20px; height: 26px; }
    .quick .drop { width: 19px; }
    .quick .gap { margin-right: 5px; }
    .quick .last { width: 16px; }
    .quick .on { width: 26px; background: #b3b3b3; border: 1px solid #7a7a7a; }
    .quick .ondrop { width: 13px; border: 1px solid #b0b0b0; border-left: 0; background: #fff; margin-right: 5px; }
    .title { flex: 1; text-align: center; }
    .search { display: flex; align-items: center; width: 202px; height: 23px; border: 1px solid #111; background: #f0f1f6; padding: 0 3px 0 5px; gap: 4px; }
    .search .ic { width: 16px; height: 16px; }
    input { flex: 1; min-width: 0; border: 0; background: none; font: inherit; outline: none; padding: 0 2px; }
    input::placeholder { color: #5c5c5c; opacity: 1; }
    .win { display: flex; align-items: center; color: #444; padding-left: 4px; }
    .win button { width: 26px; height: 26px; }
    .win button:last-child { width: 24px; }
    .win .drop { width: 12px; }
    .win .ic { width: 16px; height: 16px; }
  `];

  render() {
    const menu = ["File", "Edit", "View", "Insert", "Tools", "PhotoView 360", "Window", "Help"];
    const drop = (label: string) => html`<button class="drop" aria-label=${label}>${caret}</button>`;
    return html`
      <div class="logo">
        <svg class="ds" viewBox="0 0 28 28" aria-hidden="true" fill="none" stroke="#d9261c" stroke-width="2.300">
          <path d="M7 2.500c5-2 9-1 8 1.500-1 3-4 4-7 5"/>
          <path d="M5 12c8-2 11 1 9 6-2 5-7 7-12 7l5-9"/>
          <path d="M27 9.500c-6-1-9 1-8 4 1 2 6 3 5 6-1 4-6 4-9 3.500"/>
        </svg>
        <div class="word">SOLID<span>WORKS</span></div>
      </div>
      <nav>${menu.map((m) => html`<a href="#${m}">${m}</a>`)}</nav>
      <button class="pin" aria-label="Pin menu">${icon("pin")}</button>
      <div class="quick">
        <button aria-label="Home" class="gap">${icon("house")}</button>
        <button aria-label="New">${icon("newDoc")}</button>${drop("New options")}
        <button aria-label="Open">${icon("open")}</button>${drop("Open options")}
        <button aria-label="Save">${icon("save")}</button>${drop("Save options")}
        <button aria-label="Print">${icon("print")}</button>${drop("Print options")}
        <button aria-label="Undo">${icon("undo")}</button><button class="drop last" aria-label="Undo list">${caret}</button>
        <button aria-label="Select" class="on">${icon("cursor")}</button>
        <button aria-label="Select options" class="ondrop">${caret}</button>
        <button aria-label="Rebuild" class="gap">${icon("traffic")}</button>
        <button aria-label="File properties" class="gap">${icon("list")}</button>
        <button aria-label="Options">${icon("gear")}</button>${drop("Options list")}
      </div>
      <div class="title">CESSNA-206T-AIRVENT-0012</div>
      <label class="search">
        ${icon("prompt")}
        <input type="text" placeholder="Search Commands" aria-label="Search Commands" />
        ${icon("lens")}${caret}
      </label>
      <div class="win">
        <button aria-label="Account">${icon("user")}</button>
        <button aria-label="Help">${icon("help")}</button>
        <button class="drop" aria-label="Help options">${caret}</button>
        <button aria-label="Minimize">${icon("min")}</button>
        <button aria-label="Span displays">${icon("split")}</button>
        <button aria-label="Restore">${icon("restore")}</button>
        <button aria-label="Close">${icon("close")}</button>
      </div>`;
  }
}

/* ---------- command ribbon ---------- */

interface Cmd { label: string; icon: string; w: number; drop?: boolean; off?: boolean; on?: boolean; }

const RIBBON: Cmd[][] = [
  [
    { label: "Edit\nComponent", icon: "editComp", w: 67, off: true },
    { label: "Insert\nComponents", icon: "insertComp", w: 78, drop: true },
    { label: "Mate", icon: "clip", w: 35 },
    { label: "Component\nPreview\nWindow", icon: "preview", w: 72, off: true },
    { label: "Linear Component\nPattern", icon: "pattern", w: 104, drop: true },
    { label: "Smart\nFasteners", icon: "smart", w: 60 },
    { label: "Move\nComponent", icon: "move", w: 72, drop: true },
  ],
  [{ label: "Show\nHidden\nComponents", icon: "showHidden", w: 79 }],
  [
    { label: "Assembly\nFeatures", icon: "asmFeat", w: 58, drop: true },
    { label: "Reference\nGeometry", icon: "refGeo", w: 61, drop: true },
  ],
  [{ label: "New\nMotion\nStudy", icon: "motion", w: 50 }],
  [{ label: "Bill of\nMaterials", icon: "bom", w: 59 }],
  [{ label: "Exploded\nView", icon: "exploded", w: 60, drop: true }],
  [{ label: "Instant3D", icon: "instant", w: 61, on: true }],
  [{ label: "Update\nSpeedpak", icon: "speedpak", w: 63 }],
  [
    { label: "Take\nSnapshot", icon: "camera", w: 62 },
    { label: "Large\nAssembly\nMode", icon: "large", w: 54 },
    { label: "New\nPart", icon: "newPart", w: 36 },
  ],
];

@customElement("command-ribbon")
export class CommandRibbon extends LitElement {
  static styles = [base, css`
    :host { display: flex; height: 86px; border-bottom: 1px solid #868686; padding: 5px 0 3px 5px; }
    .group { display: flex; border-right: 1px solid #c9c9c9; }
    .group:last-child { border: 0; }
    button { flex-direction: column; justify-content: flex-start; padding-top: 12px; line-height: 13px; white-space: pre; text-align: center; }
    button.drop { padding-top: 5px; }
    button.drop span { flex: 1; }
    button.drop .caret { margin-bottom: 8px; }
    span { padding-top: 2px; }
    .off { color: #b4b4b4; }
    .on { background: #b0b0b0; border: 1px solid #6c6c6c; padding-top: 11px; }
    .ic { width: 19px; height: 19px; }
  `];

  render() {
    return RIBBON.map((g) => html`<div class="group">${g.map((c) => html`
      <button class=${classMap({ drop: !!c.drop, off: !!c.off, on: !!c.on })} style="width:${c.w}px" ?disabled=${!!c.off}>
        ${icon(c.icon)}<span>${c.label}</span>${c.drop ? caret : nothing}
      </button>`)}</div>`);
  }
}

/* ---------- left tool columns ---------- */

const COL_A = ["d1", "d2", "d3", "-", "d4", "d5", "d6", "d7", "d8", "d9", "d10v", "mushroom", "-", "pocket", "hole", "d11", "-", "d12", "d12b", "d13", "d14", "d15", "d16"];
const COL_B = ["td", "d17", "d18", "d19", "d20", "d18b", "d21", "d15", "pocket", "holeW", "chamfer", "refGeov"];
const COL_C = ["a1", "a2", "a3", "a4", "a5", "a6", "a7", "a8"];
const ENABLED = new Set(["mushroom", "pocket", "hole", "td", "holeW", "chamfer", "refGeo", "a3"]);

@customElement("tool-column")
export class ToolColumn extends LitElement {
  @property({ attribute: false }) items: string[] = [];
  static styles = [base, css`
    :host { display: flex; flex-direction: column; border: 1px solid #868686; border-left: 0; border-top: 0; padding: 3px 3px 8px; }
    .grip { border-top: 2px dotted #8d8d8d; margin-bottom: 7px; height: 3px; }
    .line { height: 8px; border-top: 1px solid #868686; margin: 2px 1px -2px 2px; }
    button { height: 26px; justify-content: flex-start; padding-left: 3px; }
    .ic { width: 19px; height: 19px; }
    .caret { margin-left: 10px; color: #333; }
    .off { fill: #ebebeb; stroke: #bcbcbc; color: #bcbcbc; }
    .live { color: #333; }
    .off + .caret { color: #888; }
  `];
  render() {
    return html`<div class="grip"></div>${this.items.map((raw) => {
      if (raw === "-") return html`<div class="line"></div>`;
      const drop = raw.endsWith("v");
      const name = drop ? raw.slice(0, -1) : raw;
      const live = ENABLED.has(name);
      return html`<button aria-label="Tool ${name}" ?disabled=${!live}>
        ${icon(name, live ? "live" : "off")}${drop ? caret : nothing}</button>`;
    })}`;
  }
}

/* ---------- configuration manager ---------- */

@customElement("manager-panel")
export class ManagerPanel extends LitElement {
  @state() private tab = 2;
  static styles = [base, css`
    :host { display: flex; flex-direction: column; padding: 0 2px 0 1px; min-width: 0; }
    .strip { height: 5px; border: 1px solid #b9c3c3; border-top: 0; background: #fff; }
    .dot { height: 15px; border-bottom: 1px solid #b5b5b5; display: grid; place-items: center; }
    .dot i { width: 6px; height: 6px; border-radius: 50%; border: 1px solid #888; background: #ccc; }
    .tabs { display: flex; margin-top: 3px; height: 27px; padding-left: 2px; }
    .tabs::after { content: ""; flex: 1; border-bottom: 1px solid #a0a0a0; }
    .tabs button { width: 40px; background: #d3d3d3; border: 1px solid #8e8e8e; border-left: 0; }
    .tabs button.active { background: #f7f7f7; border-bottom-color: #f7f7f7; border-top-color: #ddd; }
    h2 { text-align: center; font-weight: 700; line-height: 33px; height: 32px; border-bottom: 1px solid #a9a9a9; padding-left: 4px; }
    .tree { padding-top: 11px; flex: 1; overflow: hidden; }
    .row { display: flex; align-items: center; height: 22px; white-space: nowrap; }
    .r1 { padding-left: 7px; gap: 4px; }
    .r1 .caret { margin-right: 9px; color: #444; width: 7px; }
    .r2 { padding-left: 31px; }
    .r2 .side { width: 5px; height: 8px; margin-right: 13px; }
    .r2 .ic { margin-right: 7px; }
    .r2 .ok { width: 15px; height: 15px; }
    .scroll { height: 17px; display: flex; background: #f0f0f0; align-items: stretch; border-top: 1px solid #fff; }
    .scroll button { width: 17px; color: #444; }
    .scroll svg { width: 8px; height: 10px; }
    .track { flex: 1; }
    .thumb { width: 82%; height: 100%; background: #cbcbcb; }
    h3 { text-align: center; font-weight: 700; border: 1px solid #a9a9a9; line-height: 23px; height: 25px; background: #fbfbfb; padding-left: 4px; margin-top: 1px; }
    .state { padding-left: 26px; gap: 5px; height: 22px; }
    .foot { height: 31px; border-bottom: 1px solid #c4c4c4; margin-top: 6px; }
    .foot2 { height: 4px; }
  `];
  render() {
    const tabs = ["part", "props", "config", "target", "ballDark"];
    return html`
      <div class="strip"></div>
      <div class="dot"><i></i></div>
      <div class="tabs">${tabs.map((t, i) => html`<button class=${classMap({ active: i === this.tab })} aria-label=${t} @click=${() => (this.tab = i)}>${icon(t)}</button>`)}</div>
      <h2>Configurations</h2>
      <div class="tree">
        <div class="row r1">${caret}${icon("part")}<span>CESSNA-206T-AIRVENT-0012 Config</span></div>
        <div class="row r2"><svg class="side" viewBox="0 0 5 8"><path d="M0 0l5 4-5 4z" fill="#555"/></svg>${icon("treeCfg")}${icon("check", "ok")}<span>Default [ Assem1 ]</span></div>
      </div>
      <div class="scroll">
        <button aria-label="Scroll left"><svg viewBox="0 0 8 10"><path d="M6 1L2 5l4 4" fill="none" stroke="#444" stroke-width="2"/></svg></button>
        <div class="track"><div class="thumb"></div></div>
        <button aria-label="Scroll right"><svg viewBox="0 0 8 10"><path d="M2 1l4 4-4 4" fill="none" stroke="#444" stroke-width="2"/></svg></button>
      </div>
      <h3>Display States</h3>
      <div class="row state">${icon("dispState")}<span>Display State-1</span></div>
      <div class="foot"></div><div class="foot2"></div>`;
  }
}

/* ---------- graphics area ---------- */

/* Rib edges across the ring grip: [x1, y1, x2, y2] for each pair of lines. */
const RING_RIBS: number[][] = [
  [246, 150, 372, 130], [226, 163, 366, 147],
  [190, 228, 332, 206], [184, 245, 324, 221],
  [155, 333, 304, 306], [149, 355, 298, 328],
  [139, 460, 293, 430], [139, 480, 291, 450],
  [144, 590, 301, 561], [149, 615, 303, 583],
  [171, 728, 327, 697], [178, 753, 329, 720],
  [209, 859, 364, 830], [215, 883, 369, 852],
  [264, 979, 417, 947], [271, 998, 420, 966],
  [329, 1075, 482, 1041], [336, 1086, 486, 1055],
  [390, 1136, 546, 1103], [400, 1147, 552, 1113],
];
const KNOB_RIBS: number[][] = [
  [655, 349, 846, 331], [662, 358, 838, 343],
  [620, 432, 822, 403], [616, 446, 824, 422],
  [616, 548, 650, 541], [616, 571, 650, 565],
  [704, 535, 822, 513], [704, 555, 826, 534],
  [642, 674, 847, 630], [649, 694, 851, 652],
  [692, 775, 892, 727], [705, 787, 900, 741],
];
const line = (l: number[]) => svg`<path d="M${l[0]} ${l[1]}L${l[2]} ${l[3]}"/>`;

@customElement("graphics-area")
export class GraphicsArea extends LitElement {
  static styles = [base, css`
    :host { display: block; position: relative; overflow: hidden;
      background:
        linear-gradient(180deg, #ffffff00 0%, #ffffff00 50%, #ffffff66 60%, #ffffffd0 68%, #fff 76%, #fff 86%, #f5f6fa 100%),
        radial-gradient(ellipse 60% 62% at 90% 45%, #d8dce9 0%, #dde1ecd0 45%, #ffffff00 100%),
        linear-gradient(180deg, #fff 0%, #fff 27%, #f3f4f9 36%, #e8ebf3 44%, #dfe3ee 54%, #dadfec 59%, #e8ebf3 66%, #fff 76%, #fff 100%); }
    .bar { display: grid; grid-template-columns: 1fr auto 1fr; align-items: center; height: 30px; padding-right: 9px; }
    .hud { grid-column: 2; display: flex; color: #999; }
    .hud button { width: 26px; height: 26px; }
    .hud .drop { width: 14px; }
    .doc { display: flex; justify-content: flex-end; color: #9b9b9b; }
    .doc button { width: 26px; height: 26px; }
    .doc .ic { width: 15px; height: 15px; }
    .model { position: absolute; left: 31.5%; top: 19.4%; width: 380px; height: 420px; }
    .triad { position: absolute; left: 33px; bottom: 14px; width: 44px; height: 56px; overflow: visible; }
    .handle { position: absolute; left: -1px; top: 424px; width: 9px; height: 39px; background: #f7f7f7; border: 1px solid #868686; border-left: 0; display: grid; place-items: center; }
    .handle i { width: 6px; height: 6px; border-radius: 50%; border: 1px solid #888; background: #ddd; }
  `];

  render() {
    const hud = ["zoomFit", "zoomArea", "prevView", "section", "orient", "v", "cube", "v", "eye", "v", "ballPen", "ballScene", "v", "monitor", "v"];
    const doc = ["paneL", "paneR", "min", "restore", "close"];
    return html`
      <div class="bar">
        <div class="hud">${hud.map((h) => h === "v"
          ? html`<button class="drop" aria-label="More">${caret}</button>`
          : html`<button aria-label=${h}>${icon(h)}</button>`)}</div>
        <div class="doc">${doc.map((d) => html`<button aria-label=${d}>${icon(d)}</button>`)}</div>
      </div>
      <svg class="model" viewBox="0 0 1140 1260" role="img" aria-label="Air vent assembly">
        <defs>
          <linearGradient id="band" x1="0" y1="0" x2="0" y2="1">
            <stop offset="0" stop-color="#666"/><stop offset=".1" stop-color="#838383"/><stop offset=".22" stop-color="#686868"/>
            <stop offset=".4" stop-color="#656563"/><stop offset=".6" stop-color="#6a6a68"/><stop offset=".85" stop-color="#6c6c6c"/><stop offset="1" stop-color="#808080"/>
          </linearGradient>
          <linearGradient id="bowl" gradientUnits="userSpaceOnUse" x1="400" y1="80" x2="660" y2="1150">
            <stop offset="0" stop-color="#707070"/><stop offset=".09" stop-color="#8c8c8c"/><stop offset=".2" stop-color="#6c6c6c"/>
            <stop offset=".55" stop-color="#666"/><stop offset=".78" stop-color="#6a6a6a"/><stop offset=".9" stop-color="#8e8e8e"/><stop offset="1" stop-color="#767676"/>
          </linearGradient>
          <linearGradient id="knob" x1="0" y1="0" x2=".15" y2="1">
            <stop offset="0" stop-color="#666"/><stop offset=".14" stop-color="#808080"/><stop offset=".28" stop-color="#656565"/>
            <stop offset=".6" stop-color="#6b6b69"/><stop offset=".85" stop-color="#666"/><stop offset="1" stop-color="#909090"/>
          </linearGradient>
          <linearGradient id="cone" x1="0" y1="0" x2=".6" y2="1">
            <stop offset="0" stop-color="#6a6a6a"/><stop offset=".25" stop-color="#858585"/><stop offset=".6" stop-color="#6a6a6a"/><stop offset="1" stop-color="#606060"/>
          </linearGradient>
          <radialGradient id="sphere" cx=".5" cy=".4"><stop offset="0" stop-color="#8e8e8e"/><stop offset="1" stop-color="#606060"/></radialGradient>
        </defs>
        <g stroke="#0c0c0c" stroke-width="3.500" stroke-linejoin="round" stroke-linecap="round">
          <path d="M180 238C118 270 86 395 90 525C96 740 180 1020 335 1094L420 900V300Z" fill="#6d6d6a"/>
          <path d="M430 90C520 65 625 155 712 325C790 480 822 690 803 825C800 980 735 1130 622 1138C520 1130 430 1010 370 865C318 730 297 600 297 500C297 300 350 110 430 90Z" fill="url(#bowl)"/>
          <path d="M420 98C490 78 610 160 705 318" fill="none" stroke-width="2.500"/>
          <path d="M345 195L410 192L480 330L475 368L303 512C294 420 300 270 345 195Z" fill="#686868" stroke="none"/>
          <path d="M345 195H378" fill="none"/>
          <path d="M322 240C370 225 415 260 448 292C466 325 472 345 475 370L312 495C330 460 320 420 303 392C304 330 308 280 322 240Z" fill="url(#cone)"/>
          <path d="M302 388C322 430 326 465 320 492L303 506C299 470 299 425 302 388Z" fill="#fdfdfe" stroke-width="2.500"/>
          <path d="M475 368L312 502L305 570H385C405 560 405 545 412 520L430 420Z" fill="#777" stroke="none"/>
          <path d="M470 368L312 498M312 572H382C402 565 402 548 411 515" fill="none"/>
          <path d="M315 622H410C425 740 480 845 545 862L485 1036C400 940 340 780 315 622Z" fill="#676767" stroke="none"/>
          <path d="M362 195L412 166C420 168 424 176 426 184L552 358L490 366Z" fill="#6b6b6b"/>
          <path d="M376 195L486 362M394 185L516 358M426 184L552 358" fill="none"/>
          <path d="M470 240C500 268 525 305 545 352" fill="none" stroke-width="4"/>
          <path d="M643 850C645 940 605 1045 530 1068L600 860Z" fill="#7d7d7d"/>
          <path d="M545 862L485 1036L527 1076L606 858Z" fill="#6e6e6e"/>
          <path d="M572 862L500 1048" fill="none"/>
          <path d="M606 858L527 1076" fill="none" stroke-width="6"/>
          <path d="M548 360C500 360 450 375 428 420C395 510 405 610 425 690C450 780 495 845 545 861L640 850Z" fill="#727272"/>
          <path d="M548 358C490 362 455 440 455 540C462 700 535 852 620 854C660 850 685 800 688 745C694 560 625 370 548 358Z" fill="#656565"/>
          <path d="M540 394C495 400 468 465 472 550C482 700 545 815 610 822C650 810 672 770 678 730C672 560 600 400 540 394Z" fill="#8a8a8a"/>
          <path d="M530 404C490 415 470 470 472 550C482 700 545 812 602 818C640 790 650 710 641 640C625 520 575 430 530 404Z" fill="#606060"/>
          <ellipse cx="540" cy="614" rx="38" ry="86" transform="rotate(-9 540 614)" fill="#6f6f6d"/>
          <path d="M312 573H450L456 600L442 620H315Z" fill="#727272"/>
          <path d="M314 590H452" fill="none" stroke-width="7"/>
          <path d="M318 606H446" fill="none" stroke="#8e8e8e" stroke-width="7"/>

          <path d="M430 90C380 98 310 110 284 119C255 130 235 150 226 163L210 172C195 195 186 222 184 245L172 252L153 333L149 355L139 460L139 480L144 590L149 615L171 728L178 753L209 859L215 883L264 979L271 998L329 1075L336 1090L390 1136L400 1147C420 1160 442 1170 468 1170L625 1138C520 1130 430 1010 370 865C318 730 297 600 297 500C297 300 350 110 430 90Z" fill="url(#band)"/>
          ${RING_RIBS.map(line)}
          <path d="M400 98C385 108 375 120 372 132M366 147C355 165 342 185 334 206M322 222C312 250 306 280 302 306M292 330C287 360 284 395 284 430M280 452C280 490 282 525 288 562M292 588C298 622 305 660 313 695M320 722C328 760 338 795 349 830M360 856C374 888 388 918 404 947M416 970C432 995 448 1018 466 1040M478 1060C498 1082 518 1095 536 1106M552 1115C570 1127 590 1136 612 1140" fill="none"/>
          <path d="M430 90C350 110 297 300 297 500C297 600 318 730 370 865C430 1010 520 1130 625 1138" fill="none" stroke-width="7"/>
          <path d="M550 1105C620 1150 700 1120 740 1060C790 980 805 900 803 830" fill="none"/>
          <path d="M468 1170L605 1145" fill="none" stroke-width="6"/>

          <path d="M890 310L720 325C680 332 660 338 655 349L640 360C628 385 622 410 620 432L612 455C609 490 610 530 617 571C622 610 630 645 642 674L649 694C660 725 675 752 692 775L705 787C722 808 742 822 768 824L962 772C900 740 840 640 825 520C820 420 840 330 890 310Z" fill="url(#knob)"/>
          ${KNOB_RIBS.map(line)}
          <path d="M768 824L960 776" fill="none" stroke-width="6"/>
          <path d="M890 310C985 318 1040 460 1036 600C1034 690 1010 772 962 772C890 765 825 640 820 500C815 400 840 312 890 310Z" fill="#6c6c6c"/>
          <path d="M898 322C978 322 1034 465 1035 595C1032 690 1005 758 962 758C895 750 830 640 825 500C822 400 850 325 898 322Z" fill="#606060"/>
          <path d="M840 343C828 362 822 380 818 403M808 425C804 455 804 485 808 513M812 538C818 570 826 600 834 630M842 655C855 685 868 708 884 726M898 742C910 756 925 766 942 774" fill="none"/>
          <circle cx="675" cy="549" r="31" fill="url(#sphere)"/>
        </g>
      </svg>
      <svg class="triad" viewBox="0 0 44 56" role="img" aria-label="Axis triad">
        <circle cx="17" cy="15" r="4" fill="#14641c"/>
        <path d="M7 12l17-4" stroke="#1717a8" stroke-width="3"/><path d="M22 3l12 4-11 6z" fill="#2525c8"/>
        <path d="M7 12l2 20" stroke="#c4141c" stroke-width="3"/><path d="M5 32h9l-4 10z" fill="#a80d14"/>
        <text x="31" y="10" font-size="11" fill="#1010e0" font-family="Open Sans,sans-serif">Z</text>
        <text x="7" y="50" font-size="10" fill="#f01010" font-family="Open Sans,sans-serif">X</text>
      </svg>
      <button class="handle" aria-label="Collapse panel"><i></i></button>`;
  }
}

/* ---------- task pane ---------- */

@customElement("task-pane")
export class TaskPane extends LitElement {
  static styles = [base, css`
    :host { display: flex; }
    .rail { width: 27px; margin: 75px -1px 0 -26px; z-index: 2; align-self: flex-start; border: 1px solid #868686; border-right: 0; }
    .rail button { width: 100%; height: 24px; background: #d2d2d2; border-bottom: 1px solid #868686; border-right: 1px solid #868686; }
    .rail button:first-child { background: #f7f7f7; border-right-color: #f7f7f7; height: 23px; }
    .rail button:last-child { border-bottom: 0; }
    .body { flex: 1; border-left: 1px solid #868686; background: #f7f7f7; }
    header { height: 22px; background: #a9abaf; border-bottom: 1px solid #222; display: flex; align-items: center; justify-content: space-between; padding: 0 3px 0 9px; }
    header h2 { font-weight: 700; color: #000; }
    header svg { width: 12px; height: 12px; }
    header button:last-child svg { width: 14px; height: 14px; }
    .in { padding: 25px 24px 0 13px; color: #4a4a4a; }
    .in a { display: flex; align-items: center; height: 28px; gap: 5px; }
    .in .ic { width: 20px; height: 20px; margin-bottom: 4px; }
    .welcome { margin-bottom: 20px; }
    section { border-top: 1px solid #868686; padding-left: 3px; }
    .head { width: 100%; justify-content: space-between; height: 24px; padding-right: 8px; font-weight: 700; }
    .head svg { width: 10px; height: 7px; }
    section ul { margin-bottom: 22px; }
    .closed { height: 48px; }
  `];
  render() {
    const rail = ["house", "books", "folder", "palette", "ball", "props", "chat"];
    const tools: [string, string][] = [
      ["ptb", "Property Tab Builder"], ["rx", "SOLIDWORKS Rx"], ["rx", "Performance Benchmark Test"],
      ["score", "Compare My Score"], ["wizard", "Copy Settings Wizard"], ["products", "My Products"],
    ];
    const chev = (up: boolean) => html`<svg viewBox="0 0 10 7"><path d=${up ? "M1 6l4-4 4 4" : "M1 1l4 4 4-4"} fill="none" stroke="#666" stroke-width="2"/></svg>`;
    return html`
      <div class="rail">${rail.map((r) => html`<button aria-label=${r}>${icon(r)}</button>`)}</div>
      <div class="body">
        <header>
          <button aria-label="Collapse"><svg viewBox="0 0 12 12"><path d="M6 1L1.500 6 6 11M11 1L6.500 6l4.500 5" fill="none" stroke="#222" stroke-width="2"/></svg></button>
          <h2>SOLIDWORKS Resources</h2>
          <button aria-label="Pin"><svg viewBox="0 0 20 20">${ICONS.pinDark}</svg></button>
        </header>
        <div class="in">
          <a class="welcome" href="#welcome">${icon("house")}<span>Welcome to SOLIDWORKS</span></a>
          <section>
            <button class="head">SOLIDWORKS Tools ${chev(true)}</button>
            <ul>${tools.map(([i, t]) => html`<li><a href="#tool">${icon(i)}<span>${t}</span></a></li>`)}</ul>
          </section>
          <section class="closed"><button class="head">Online Resources ${chev(false)}</button></section>
          <section class="closed"><button class="head">Subscription Services ${chev(false)}</button></section>
        </div>
      </div>`;
  }
}

/* ---------- taskbar ---------- */

@customElement("task-bar")
export class TaskBar extends LitElement {
  static styles = [base, css`
    :host { display: flex; height: 40px; color: #fff; padding-left: 1px;
      background: linear-gradient(90deg, #222325 0%, #24262b 16%, #24384c 23%, #232a33 28%, #212123 32%, #222 39%, #26323f 45%, #253444 55%, #253548 76%, #23272e 84%, #211f20 88%, #24303c 95%, #24364a 100%); }
    .app { width: 47px; height: 40px; margin-right: 2px; }
    .app .ic { width: 24px; height: 24px; }
    .app.start .ic { width: 19px; height: 19px; }
    .app.run { background: linear-gradient(#76b9ed, #76b9ed) bottom / 40px 2px no-repeat; }
    .app.active { background: linear-gradient(#76b9ed, #76b9ed) bottom / 100% 2px no-repeat, #56606c; box-shadow: 1px 0 #2c3640; }
    .tray { margin-left: auto; display: flex; align-items: center; }
    .tray button { width: 24px; height: 40px; }
    .tray .ic { width: 16px; height: 16px; }
    .tray button:first-child .ic { width: 12px; height: 12px; }
    .clock { width: 66px; text-align: center; line-height: 18px; }
    .tray .note { width: 38px; margin-right: 8px; }
    .show { border-left: 1px solid #77808a; width: 3px; height: 40px; }
  `];
  render() {
    const apps = ["win", "plane", "chrome", "explorer", "calc", "graph", "hex", "notes", "outlook", "snip", "word", "cc", "chip", "blender", "poly", "eject", "essS", "edge", "sw18", "comp18", "e18", "vscode", "revo", "cura", "snip", "sw18"];
    return html`
      ${apps.map((a, i) => html`<button aria-label=${a} class=${classMap({ app: true, start: i === 0, run: i === 2 || i === 24, active: i === 25 })}>${icon(a)}</button>`)}
      <div class="tray">
        <button aria-label="Hidden icons">${icon("trayUp")}</button>
        <button aria-label="Network">${icon("net")}</button>
        <button aria-label="Volume">${icon("vol")}</button>
        <div class="clock">12:46 PM<br />5/28/2021</div>
        <button class="note" aria-label="Notifications">${icon("note")}</button>
        <div class="show"></div>
      </div>`;
  }
}

/* ---------- application shell ---------- */

@customElement("app-root")
export class AppRoot extends LitElement {
  @state() private tab = 0;
  static styles = [base, css`
    :host { display: flex; flex-direction: column; min-height: 100vh; background: #f7f7f7; color: #111; font: 11px/14px "Open Sans", "Noto Sans", sans-serif; overflow: hidden; }
    .main { flex: 1; display: grid; grid-template-columns: 339px 1fr 308px; grid-template-rows: 22px 1fr 15px; }
    .tabs { grid-area: 1 / 1 / 2 / 3; z-index: 2; display: flex; justify-self: start; }
    .tabs button { padding: 0 9px; background: #d4d4d4; border: 1px solid #868686; border-width: 0 1px 1px 0; color: #222; }
    .tabs button.active { background: #f7f7f7; font-weight: 700; padding: 0 8px; }
    .side { grid-area: 2 / 1 / 4 / 2; display: grid; grid-template-columns: 49px 46px 1fr; grid-template-rows: auto 1fr; }
    .a { grid-area: 1 / 1; }
    .b { grid-area: 1 / 2; align-self: start; border-right: 0; }
    .c { grid-area: 2 / 1; align-self: start; width: 34px; }
    manager-panel { grid-area: 1 / 3 / 3 / 4; border-right: 1px solid #868686; margin-bottom: 15px; }
    graphics-area { grid-area: 1 / 2 / 3 / 3; }
    .study { grid-area: 3 / 1 / 4 / 3; margin: 0 3px 0 96px; display: flex; border-top: 1px solid #868686; border-right: 1px solid #9aa; z-index: 1; }
    .study .nav { width: 16px; background: #a8a8a8; border: 1px solid #888; border-top-color: #333; color: #777; }
    .study .nav:first-child { margin-left: 27px; }
    .study svg { width: 8px; height: 8px; }
    .study .model { font-weight: 700; padding: 0 10px 0 13px; background: #fff; color: #000; }
    .study .motion { padding: 0 18px 0 10px; background: #d4d4d4; border: 1px solid #868686; border-width: 0 1px; }
    task-pane { grid-area: 1 / 3 / 4 / 4; }
    .status { height: 19px; border-top: 1px solid #868686; display: flex; align-items: center; color: #000; padding-left: 1px; }
    .status .grow { flex: 1; }
    .cell { border-right: 1px solid #ccc; padding: 0 7px 0 3px; height: 16px; line-height: 16px; }
    .gap { width: 8px; height: 16px; border-right: 1px solid #ccc; }
    .gap.wide { width: 16px; }
    .units { width: 130px; display: flex; align-items: center; justify-content: center; gap: 28px; }
    .units .caret { transform: rotate(180deg); }
    .status .ic { width: 16px; height: 16px; margin: 0 1px 0 28px; }
  `];

  render() {
    const tabs = ["Assembly", "Layout", "Sketch", "Evaluate", "Render Tools", "SOLIDWORKS Add-Ins", "SOLIDWORKS Visualize"];
    const nav: [string, string][] = [["First", "M1 0v8M7 0v8L2 4z"], ["Previous", "M6 0v8L1 4z"], ["Next", "M2 0v8l5-4z"], ["Last", "M1 0v8l5-4zM7 0v8"]];
    return html`
      <title-bar></title-bar>
      <command-ribbon></command-ribbon>
      <div class="main">
        <div class="tabs">${tabs.map((t, i) => html`<button class=${classMap({ active: i === this.tab })} @click=${() => (this.tab = i)}>${t}</button>`)}</div>
        <div class="side">
          <tool-column class="a" .items=${COL_A}></tool-column>
          <tool-column class="b" .items=${COL_B}></tool-column>
          <tool-column class="c" .items=${COL_C}></tool-column>
          <manager-panel></manager-panel>
        </div>
        <graphics-area></graphics-area>
        <div class="study">
          ${nav.map(([l, d]) => html`<button class="nav" aria-label=${l}><svg viewBox="0 0 8 8"><path d=${d} fill="currentColor" stroke="currentColor"/></svg></button>`)}
          <button class="model">Model</button>
          <button class="motion">Motion Study 1</button>
        </div>
        <task-pane></task-pane>
      </div>
      <div class="status">
        <span>SOLIDWORKS Professional 2018 SP5.0</span><span class="grow"></span>
        <span class="cell">Under Defined</span><span class="gap"></span>
        <span class="cell">Editing Assembly</span><span class="gap wide"></span>
        <span class="units">IPS ${caret}</span>${icon("tag")}
      </div>
      <task-bar></task-bar>`;
  }
}
